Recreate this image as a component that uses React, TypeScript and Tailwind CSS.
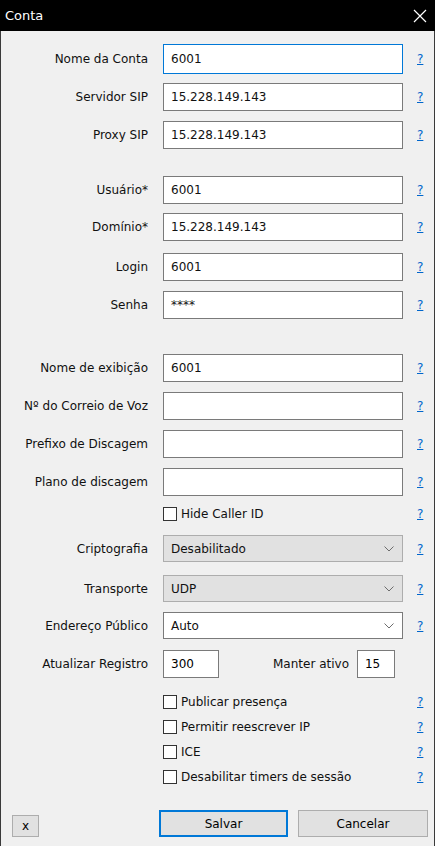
import React from "react";

const font = { fontFamily: '"DejaVu Sans", Tahoma, sans-serif' };

function Help() {
  return <span className="ml-[14px] w-[10px] text-[#0066cc] underline text-[12px] leading-none">?</span>;
}

function Label({ children }: { children: React.ReactNode }) {
  return <div className="w-[147px] shrink-0 text-right text-[12px] text-[#111]">{children}</div>;
}

function TextRow({ label, value, mt, focus, h = "h-[28px]" }: { label: string; value: string; mt: string; focus?: boolean; h?: string }) {
  return (
    <div className={`flex items-center ${mt}`}>
      <Label>{label}</Label>
      <div
        className={`ml-[15px] w-[240px] ${h} flex items-center px-[7px] bg-white text-[12px] text-[#111] border ${
          focus ? "border-[#0078d7]" : "border-[#7a7a7a]"
        }`}
      >
        {value}
      </div>
      <Help />
    </div>
  );
}

function Chevron() {
  return (
    <svg width="10" height="6" viewBox="0 0 10 6" className="ml-auto">
      <path d="M0.5 0.5 L5 5 L9.5 0.5" fill="none" stroke="#6d6d6d" strokeWidth="1" />
    </svg>
  );
}

function SelectRow({ label, value, mt, white }: { label: string; value: string; mt: string; white?: boolean }) {
  return (
    <div className={`flex items-center ${mt}`}>
      <Label>{label}</Label>
      <div
        className={`ml-[15px] w-[240px] h-[27px] flex items-center pl-[7px] pr-[8px] text-[12px] text-[#111] border ${
          white ? "bg-white border-[#7a7a7a]" : "bg-[#e1e1e1] border-[#adadad]"
        }`}
      >
        {value}
        <Chevron />
      </div>
      <Help />
    </div>
  );
}

function CheckRow({ label, mt }: { label: string; mt: string }) {
  return (
    <div className={`flex items-center h-[18px] ${mt}`}>
      <div className="w-[162px] shrink-0" />
      <div className="w-[14px] h-[14px] border border-[#333] bg-white shrink-0" />
      <div className="ml-[4px] w-[222px] text-[12px] text-[#111]">{label}</div>
      <Help />
    </div>
  );
}

export default function App() {
  return (
    <div className="w-[435px] h-[846px] bg-[#f0f0f0] flex flex-col border-l border-r border-[#3a3a3a]" style={font}>
      <div className="h-[31px] -mx-px bg-black flex items-center pl-[5px] pr-[8px] shrink-0">
        <span className="text-white text-[13px]">Conta</span>
        <svg width="14" height="14" viewBox="0 0 14 14" className="ml-auto">
          <path d="M1 1 L13 13 M13 1 L1 13" stroke="#fff" strokeWidth="1.2" />
        </svg>
      </div>

      <TextRow label="Nome da Conta" value="6001" mt="mt-[13px]" focus h="h-[30px]" />
      <TextRow label="Servidor SIP" value="15.228.149.143" mt="mt-[9px]" />
      <TextRow label="Proxy SIP" value="15.228.149.143" mt="mt-[10px]" />

      <TextRow label="Usuário*" value="6001" mt="mt-[27px]" />
      <TextRow label="Domínio*" value="15.228.149.143" mt="mt-[9px]" />
      <TextRow label="Login" value="6001" mt="mt-[12px]" />
      <TextRow label="Senha" value="****" mt="mt-[10px]" />

      <TextRow label="Nome de exibição" value="6001" mt="mt-[35px]" />
      <TextRow label="Nº do Correio de Voz" value="" mt="mt-[10px]" />
      <TextRow label="Prefixo de Discagem" value="" mt="mt-[10px]" />
      <TextRow label="Plano de discagem" value="" mt="mt-[10px]" />

      <CheckRow label="Hide Caller ID" mt="mt-[9px]" />

      <SelectRow label="Criptografia" value="Desabilitado" mt="mt-[12px]" />
      <SelectRow label="Transporte" value="UDP" mt="mt-[13px]" />
      <SelectRow label="Endereço Público" value="Auto" mt="mt-[10px]" white />

      <div className="flex items-center mt-[11px]">
        <Label>Atualizar Registro</Label>
        <div className="ml-[15px] w-[56px] h-[28px] flex items-center px-[7px] bg-white border border-[#7a7a7a] text-[12px]">300</div>
        <div className="ml-[54px] text-[12px] text-[#111]">Manter ativo</div>
        <div className="ml-[8px] w-[38px] h-[28px] flex items-center px-[7px] bg-white border border-[#7a7a7a] text-[12px]">15</div>
      </div>

      <CheckRow label="Publicar presença" mt="mt-[15px]" />
      <CheckRow label="Permitir reescrever IP" mt="mt-[7px]" />
      <CheckRow label="ICE" mt="mt-[7px]" />
      <CheckRow label="Desabilitar timers de sessão" mt="mt-[7px]" />

      <div className="flex items-end mt-[24px]">
        <button className="ml-[11px] w-[27px] h-[22px] bg-[#e1e1e1] border border-[#adadad] text-[12px] leading-none flex items-center justify-center">x</button>
        <button className="ml-[120px] w-[129px] h-[27px] bg-[#e1e1e1] border-2 border-[#0078d7] text-[12px]">Salvar</button>
        <button className="ml-[10px] w-[130px] h-[27px] bg-[#e1e1e1] border border-[#adadad] text-[12px]">Cancelar</button>
      </div>
    </div>
  );
}
